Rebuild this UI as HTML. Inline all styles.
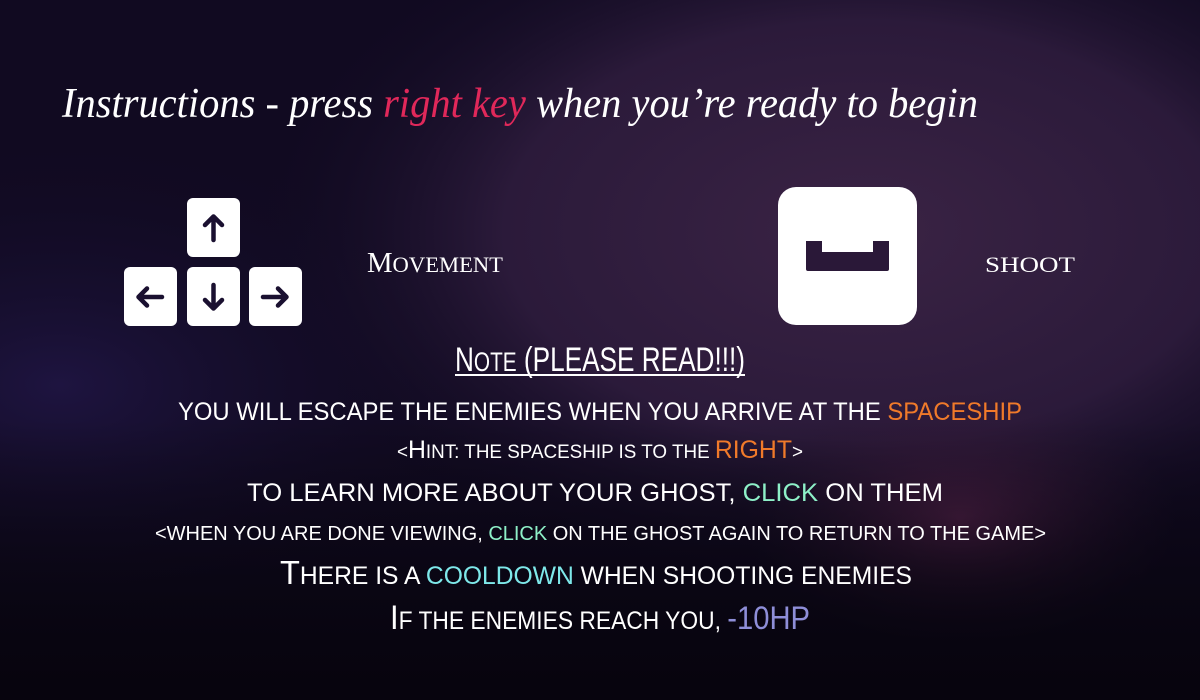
<!DOCTYPE html>
<html><head><meta charset="utf-8"><style>
html,body{margin:0;padding:0;width:1200px;height:700px;overflow:hidden;background:#110b22}
svg{display:block}
.t{font-family:"Liberation Sans Narrow","Liberation Sans",sans-serif;fill:#fff}
.s{font-family:"Liberation Serif",serif;fill:#fff}
</style></head><body>
<svg width="1200" height="700" viewBox="0 0 1200 700" xmlns="http://www.w3.org/2000/svg">
<defs>
<radialGradient id="tree" cx="0.72" cy="0.33" r="0.5">
<stop offset="0" stop-color="#3a2344"/><stop offset="0.6" stop-color="#2b1a3a"/><stop offset="1" stop-color="#140d26" stop-opacity="0"/>
</radialGradient>
<radialGradient id="pink" cx="0.8" cy="0.74" r="0.18">
<stop offset="0" stop-color="#4a1f45"/><stop offset="1" stop-color="#2a1530" stop-opacity="0"/>
</radialGradient>
<linearGradient id="bot" x1="0" y1="0" x2="0" y2="1">
<stop offset="0.6" stop-color="#000" stop-opacity="0"/><stop offset="1" stop-color="#05030a" stop-opacity="0.85"/>
</linearGradient>
<radialGradient id="lft" cx="0.05" cy="0.55" r="0.35">
<stop offset="0" stop-color="#1e1440"/><stop offset="1" stop-color="#120c25" stop-opacity="0"/>
</radialGradient>
</defs>
<rect width="1200" height="700" fill="#110a21"/>
<rect width="1200" height="700" fill="url(#lft)"/>
<rect width="1200" height="700" fill="url(#tree)"/>
<rect width="1200" height="700" fill="url(#pink)"/>
<rect width="1200" height="700" fill="url(#bot)"/>

<text x="62" y="117" font-family="Liberation Serif,serif" font-style="italic" font-size="42" fill="#fff" textLength="916" lengthAdjust="spacingAndGlyphs">Instructions - press <tspan fill="#e0285a">right key</tspan> when you’re ready to begin</text>

<g fill="#fff">
<rect x="187" y="198" width="53" height="59" rx="6"/>
<rect x="124" y="267" width="53" height="59" rx="6"/>
<rect x="187" y="267" width="53" height="59" rx="6"/>
<rect x="249" y="267" width="53" height="59" rx="6"/>
<rect x="778" y="187" width="139" height="138" rx="18"/>
</g>
<g stroke="#1a1030" stroke-width="4.5" fill="none" stroke-linecap="round" stroke-linejoin="round">
<path d="M213.5 240V217M205 225l8.5-8.5 8.5 8.5"/>
<path d="M213.5 285V308M205 300l8.5 8.5 8.5-8.5"/>
<path d="M162 297H139M147 288.5l-8.5 8.5 8.5 8.5"/>
<path d="M263 297H286M278 288.5l8.5 8.5-8.5 8.5"/>
</g>
<path d="M806 241h16v11h51v-11h16v28a2 2 0 0 1-2 2h-79a2 2 0 0 1-2-2z" fill="#2a1838"/>

<text class="s" x="367" y="272" font-size="22" textLength="136" lengthAdjust="spacingAndGlyphs"><tspan font-size="28">M</tspan>OVEMENT</text>
<text class="s" x="985" y="272" font-size="22" textLength="90" lengthAdjust="spacingAndGlyphs">SHOOT</text>

<text class="t" x="455" y="371" font-size="34" textLength="290" lengthAdjust="spacingAndGlyphs"><tspan>N</tspan><tspan font-size="27">OTE</tspan> (PLEASE READ!!!)</text>
<rect x="455" y="374" width="290" height="2" fill="#fff"/>
<text class="t" x="178" y="420" font-size="25" textLength="844" lengthAdjust="spacingAndGlyphs">YOU WILL ESCAPE THE ENEMIES WHEN YOU ARRIVE AT THE <tspan fill="#f07a2a">SPACESHIP</tspan></text>
<text class="t" x="397" y="458" font-size="19" textLength="406" lengthAdjust="spacingAndGlyphs">&lt;<tspan font-size="25">H</tspan>INT: THE SPACESHIP IS TO THE <tspan fill="#f07a2a" font-size="25">RIGHT</tspan>&gt;</text>
<text class="t" x="247" y="501" font-size="25" textLength="696" lengthAdjust="spacingAndGlyphs">TO LEARN MORE ABOUT YOUR GHOST, <tspan fill="#8ef0c8">CLICK</tspan> ON THEM</text>
<text class="t" x="155" y="540" font-size="20" textLength="891" lengthAdjust="spacingAndGlyphs">&lt;WHEN YOU ARE DONE VIEWING, <tspan fill="#8ef0c8">CLICK</tspan> ON THE GHOST AGAIN TO RETURN TO THE GAME&gt;</text>
<text class="t" x="280" y="584" font-size="25" textLength="632" lengthAdjust="spacingAndGlyphs"><tspan font-size="33">T</tspan>HERE IS A <tspan fill="#7ee8ea">COOLDOWN</tspan> WHEN SHOOTING ENEMIES</text>
<text class="t" x="390" y="629" font-size="25" textLength="420" lengthAdjust="spacingAndGlyphs"><tspan font-size="34">I</tspan>F THE ENEMIES REACH YOU, <tspan fill="#8e8ed8" font-size="32">-10HP</tspan></text>
</svg>
</body></html>
